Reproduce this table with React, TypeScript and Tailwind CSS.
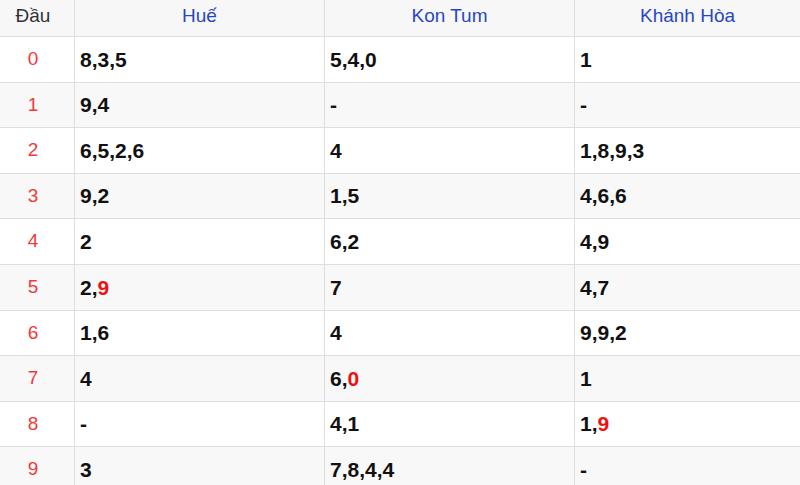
const rows: { dau: string; cells: string[][] }[] = [
  { dau: "0", cells: [["8,3,5"], ["5,4,0"], ["1"]] },
  { dau: "1", cells: [["9,4"], ["-"], ["-"]] },
  { dau: "2", cells: [["6,5,2,6"], ["4"], ["1,8,9,3"]] },
  { dau: "3", cells: [["9,2"], ["1,5"], ["4,6,6"]] },
  { dau: "4", cells: [["2"], ["6,2"], ["4,9"]] },
  { dau: "5", cells: [["2,", "9"], ["7"], ["4,7"]] },
  { dau: "6", cells: [["1,6"], ["4"], ["9,9,2"]] },
  { dau: "7", cells: [["4"], ["6,", "0"], ["1"]] },
  { dau: "8", cells: [["-"], ["4,1"], ["1,", "9"]] },
  { dau: "9", cells: [["3"], ["7,8,4,4"], ["-"]] },
];

const provinces = ["Huế", "Kon Tum", "Khánh Hòa"];

export default function App() {
  return (
    <div className="w-[800px] h-[485px] overflow-hidden bg-white" style={{ fontFamily: '"Liberation Sans", Arial, sans-serif' }}>
      <div className="flex h-[37px] bg-[#f7f7f7] border-b border-[#dedede] text-[19px]">
        <div className="w-[75px] border-r border-[#dedede] flex items-center justify-center pr-[8px] pb-[3px] text-[#333]">Đầu</div>
        {provinces.map((p, i) => (
          <div
            key={p}
            className={
              i < 2
                ? "w-[250px] border-r border-[#dedede] flex items-center justify-center pb-[3px] text-[#2847c2]"
                : "flex-1 flex items-center justify-center pb-[3px] text-[#2847c2]"
            }
          >
            {p}
          </div>
        ))}
      </div>
      {rows.map((r, idx) => (
        <div
          key={r.dau}
          className={
            idx % 2 === 0
              ? "flex h-[45.6px] bg-white border-b border-[#dedede]"
              : "flex h-[45.6px] bg-[#f8f8f8] border-b border-[#dedede]"
          }
        >
          <div className="w-[75px] border-r border-[#dedede] flex items-center justify-center pr-[8px] text-[19px] text-[#f03a3a]">
            {r.dau}
          </div>
          {r.cells.map((c, i) => (
            <div
              key={i}
              className={
                i < 2
                  ? "w-[250px] border-r border-[#dedede] flex items-center pl-[5px] text-[21px] font-bold text-[#111]"
                  : "flex-1 flex items-center pl-[5px] text-[21px] font-bold text-[#111]"
              }
            >
              {c[0]}
              {c[1] && <span className="text-[#ee1111]">{c[1]}</span>}
            </div>
          ))}
        </div>
      ))}
    </div>
  );
}
